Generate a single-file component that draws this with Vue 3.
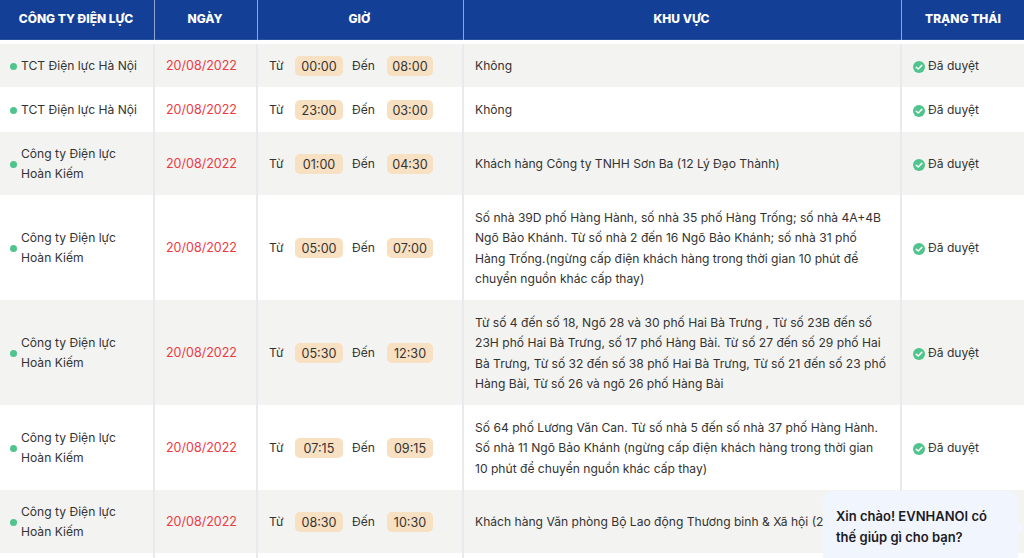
<script setup>
const kiem = 'Công ty Điện lực Hoàn Kiếm'
const hn = 'TCT Điện lực Hà Nội'
const rows = [
  { c: hn, f: '00:00', t: '08:00', a: 'Không', h: 43, s: true },
  { c: hn, f: '23:00', t: '03:00', a: 'Không', h: 45, s: true },
  { c: kiem, f: '01:00', t: '04:30', a: 'Khách hàng Công ty TNHH Sơn Ba (12 Lý Đạo Thành)', h: 63, s: true },
  { c: kiem, f: '05:00', t: '07:00', a: 'Số nhà 39D phố Hàng Hành, số nhà 35 phố Hàng Trống; số nhà 4A+4B Ngõ Bảo Khánh. Từ số nhà 2 đến 16 Ngõ Bảo Khánh; số nhà 31 phố Hàng Trống.(ngừng cấp điện khách hàng trong thời gian 10 phút để chuyển nguồn khác cấp thay)', h: 105, s: true },
  { c: kiem, f: '05:30', t: '12:30', a: 'Từ số 4 đến số 18, Ngõ 28 và 30 phố Hai Bà Trưng , Từ số 23B đến số 23H phố Hai Bà Trưng, số 17 phố Hàng Bài. Từ số 27 đến số 29 phố Hai Bà Trưng, Từ số 32 đến số 38 phố Hai Bà Trưng, Từ số 21 đến số 23 phố Hàng Bài, Từ số 26 và ngõ 26 phố Hàng Bài', h: 105, s: true },
  { c: kiem, f: '07:15', t: '09:15', a: 'Số 64 phố Lương Văn Can. Từ số nhà 5 đến số nhà 37 phố Hàng Hành. Số nhà 11 Ngõ Bảo Khánh (ngừng cấp điện khách hàng trong thời gian 10 phút để chuyển nguồn khác cấp thay)', h: 85, s: true },
  { c: kiem, f: '08:30', t: '10:30', a: 'Khách hàng Văn phòng Bộ Lao động Thương binh & Xã hội (2', h: 63, s: false },
  { c: '', f: '', t: '', a: '', h: 60, s: false }
]
</script>

<template>
  <div class="page">
    <div class="grid head">
      <div class="th">CÔNG TY ĐIỆN LỰC</div>
      <div class="th">NGÀY</div>
      <div class="th">GIỜ</div>
      <div class="th">KHU VỰC</div>
      <div class="th">TRẠNG THÁI</div>
    </div>
    <div class="body">
      <template v-for="(r, i) in rows" :key="i">
        <div v-if="r.f" class="grid row" :style="{ height: r.h + 'px' }">
          <div class="td company">
            <span class="dot"></span>
            <span class="cname">{{ r.c }}</span>
          </div>
          <div class="td date">20/08/2022</div>
          <div class="td time">
            <span class="lbl">Từ</span><span class="pill">{{ r.f }}</span>
            <span class="lbl to">Đến</span><span class="pill">{{ r.t }}</span>
          </div>
          <div class="td area">{{ r.a }}</div>
          <div class="td status">
            <template v-if="r.s">
              <svg class="check" viewBox="0 0 12 12" width="12" height="12" aria-hidden="true">
                <circle cx="6" cy="6" r="6" fill="#4fc48c" />
                <path d="M3.2 6.2 5.2 8 8.8 4.4" fill="none" stroke="#fff" stroke-width="1.5" stroke-linecap="round" stroke-linejoin="round" />
              </svg>
              <span>Đã duyệt</span>
            </template>
          </div>
        </div>
        <div v-else class="grid row" :style="{ height: r.h + 'px' }">
          <div class="td"></div><div class="td"></div><div class="td"></div><div class="td"></div><div class="td"></div>
        </div>
      </template>
    </div>
    <div class="bubble">Xin chào! EVNHANOI có thế giúp gì cho bạn?</div>
  </div>
</template>

<style>
html, body { margin: 0; background: #fff; overflow: hidden; }
</style>

<style scoped>
.page {
  position: relative;
  width: 1024px;
  height: 558px;
  overflow: hidden;
  font-family: Inter, "Noto Sans", sans-serif;
  font-size: 12.1px;
  color: #333;
}
.grid {
  display: grid;
  grid-template-columns: 155px 103px 206px 438px 122px;
}
.head {
  height: 40px;
  background: #143f96;
  box-shadow: inset 0 -1px 0 #2a539f;
}
.th {
  display: flex;
  align-items: center;
  justify-content: center;
  padding: 0 2px 3px 0;
  color: #fff;
  font-weight: 800;
  font-size: 12px;
  border-right: 1px solid #8fa6cf;
}
.th:last-child { border-right: none; padding-right: 0; }
.body { margin-top: 4px; }
.row:nth-child(odd) { background: #f3f3f2; }
.td {
  display: flex;
  align-items: center;
  padding: 2px 12px 0;
  border-right: 2px solid #e9e9ee;
  line-height: 20.5px;
  min-width: 0;
  box-sizing: border-box;
}
.td:last-child { border-right: none; }
.company { padding: 1px 10px 0; gap: 4px; line-height: 20px; }
.dot {
  flex: none;
  width: 7px;
  height: 7px;
  border-radius: 50%;
  background: #4fc48c;
}
.cname { flex: 1; }
.date { color: #ee3a3f; padding: 1px 0 0 11px; font-size: 12.5px; }
.time { padding: 1px 0 0 11px; }
.lbl { width: 26px; }
.to { width: 35px; margin-left: 9px; }
.pill {
  display: inline-block;
  width: 48px;
  height: 20px;
  line-height: 21px;
  font-size: 12.6px;
  text-align: center;
  background: #f8e0c2;
  border-radius: 5px;
}
.pill:last-child { width: 46px; }
.area { padding: 2px 12px 0 11px; }
.status { padding: 2px 0 0 11px; gap: 3px; }
.check { flex: none; }
.bubble {
  position: absolute;
  left: 823px;
  top: 491px;
  width: 195px;
  height: 80px;
  box-sizing: border-box;
  padding: 15px 13px;
  background: #f1f5fe;
  border-radius: 10px;
  font-size: 13px;
  line-height: 21px;
  font-weight: 600;
  color: #1b1b24;
}
.bubble::after {
  content: "";
  position: absolute;
  right: -4px;
  top: 33px;
  width: 8px;
  height: 8px;
  background: #f1f5fe;
  transform: rotate(45deg);
}
</style>
